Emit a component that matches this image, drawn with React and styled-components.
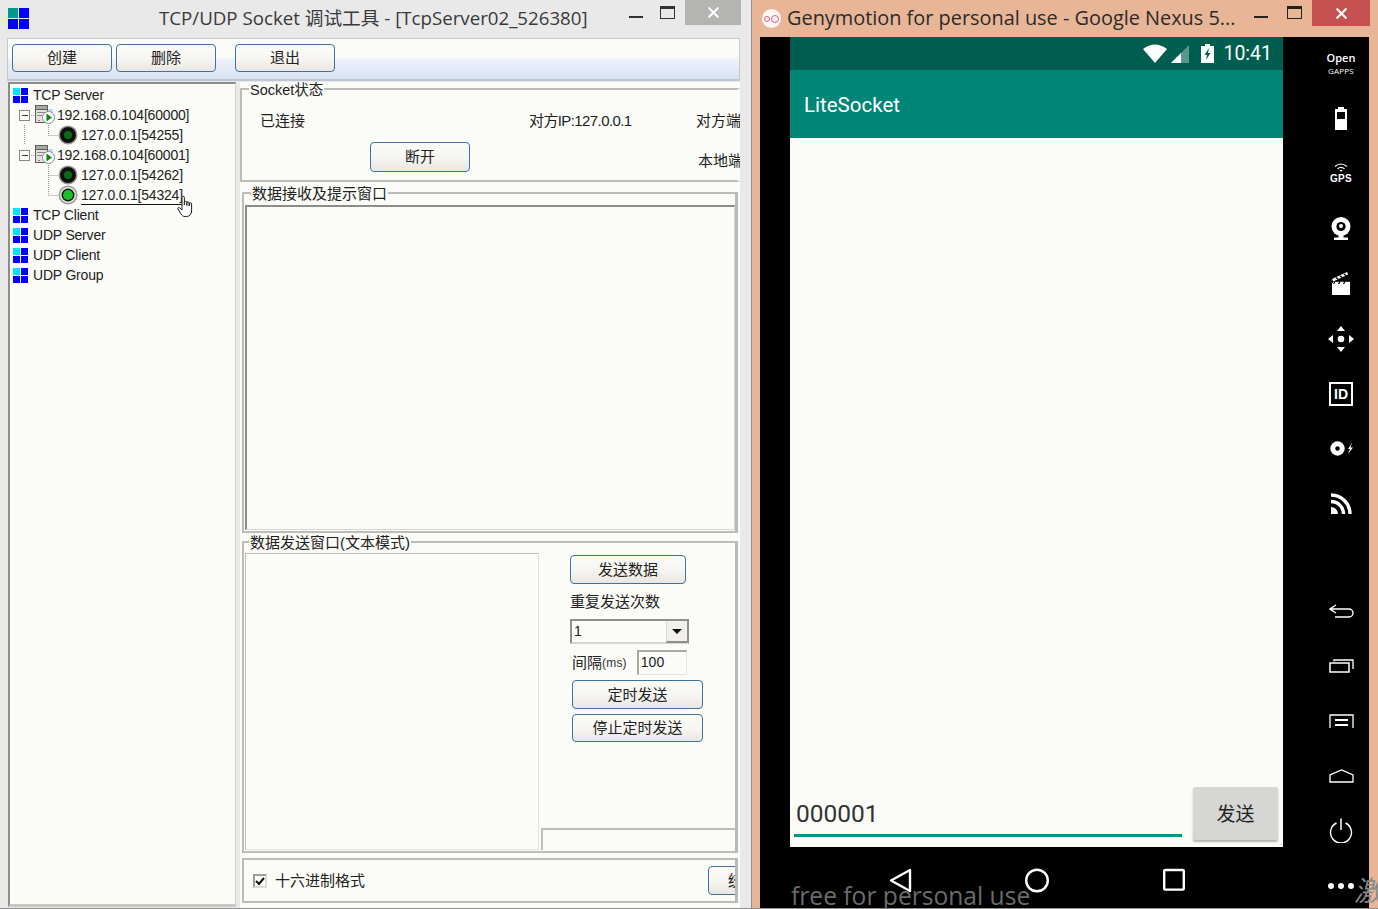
import React from "react";
import styled, { createGlobalStyle } from "styled-components";
import { X } from "lucide-react";

const CJK = `"Noto Sans CJK SC"`;
const UI_FONT = `"Liberation Sans", ${CJK}, sans-serif`;
const TITLE_FONT = `"Open Sans", ${CJK}, sans-serif`;
const PAPER = "#fbfcf8";

const GlobalStyle = createGlobalStyle`
  html, body { margin: 0; padding: 0; background: #e9e9e9; }
  * { box-sizing: border-box; }
`;

const Desktop = styled.div`
  display: flex;
  width: 1378px;
  height: 909px;
  overflow: hidden;
  position: relative;
`;

/* ---------- window chrome ---------- */

const ToolWindow = styled.div`
  width: 752px;
  flex: none;
  background: #e9e9e9;
  border-right: 1px solid #8f8f8f;
  border-bottom: 1px solid #8f8f8f;
  padding-left: 7px;
  display: flex;
  flex-direction: column;
`;

const TitleBar = styled.div`
  height: 38px;
  flex: none;
  display: flex;
  align-items: flex-start;
  position: relative;
`;

const AppLogo = styled.svg`
  position: absolute;
  left: 1px;
  top: 8px;
`;

const TitleText = styled.div`
  position: absolute;
  left: ${(p) => p.$left}px;
  top: 4px;
  font: ${(p) => p.$size}px/28px ${TITLE_FONT};
  color: ${(p) => p.$color || "#3a3a3a"};
  white-space: nowrap;
`;

const WinButtons = styled.div`
  position: absolute;
  top: 0;
  right: ${(p) => p.$right}px;
  display: flex;
  align-items: flex-start;
`;

const MinButton = styled.div`
  width: 14px;
  height: 2px;
  margin-top: 16px;
  background: ${(p) => p.$color};
`;

const MaxButton = styled.div`
  width: 15px;
  height: 13px;
  margin: 6px 10px 0 ${(p) => p.$gap || 17}px;
  border: 1px solid ${(p) => p.$color};
  border-top-width: 3px;
`;

const CloseButton = styled.div`
  width: ${(p) => p.$width}px;
  height: ${(p) => p.$height}px;
  background: ${(p) => p.$bg};
  color: #fff;
  display: flex;
  align-items: center;
  justify-content: center;
`;

/* ---------- tool window client ---------- */

const Client = styled.div`
  width: 733px;
  flex: 1;
  min-height: 0;
  display: flex;
  flex-direction: column;
  background: #e9e9e9;
  font: 14px/20px ${UI_FONT};
  color: #222;
`;

const Toolbar = styled.div`
  height: 43px;
  flex: none;
  display: flex;
  gap: 4px;
  padding: 5px 4px 0 4px;
  border: 1px solid #c9c9c4;
  border-bottom: 2px solid #bcc6d4;
  background: linear-gradient(180deg, ${PAPER} 0 18px, #eef2fb 20px, #d9e2f3 100%);
`;

const WinButton = styled.button`
  width: ${(p) => p.$width}px;
  height: ${(p) => p.$height || 28}px;
  margin-left: ${(p) => p.$gap || 0}px;
  flex: none;
  padding: 0;
  border: 1.5px solid #41719f;
  border-radius: 4px;
  background: linear-gradient(180deg, #fbfbf8 0%, #f6f5f1 55%, #e8e6e0 100%);
  font: 15px/20px ${UI_FONT};
  color: #222;
  white-space: nowrap;
  overflow: hidden;
`;

const Body = styled.div`
  flex: 1;
  min-height: 0;
  display: flex;
  padding-top: 1px;
`;

const TreePanel = styled.div`
  width: 228px;
  margin: 0 4px 1px 1px;
  flex: none;
  padding: 1px 0 0 3px;
  background: ${PAPER};
  border: 1px solid #d4d4cf;
  border-left: 2px solid #8c8c88;
  border-top: 2px solid #8c8c88;
  border-bottom: 3px solid #c9c9c4;
`;

const TreeRowBox = styled.div`
  height: 20px;
  display: flex;
  align-items: center;
  letter-spacing: -0.2px;
  white-space: nowrap;
  position: relative;
  color: #222;
`;

const RootLabel = styled.span`
  margin-left: 5px;
`;

const NodeLabel = styled.span`
  margin: 2px 0 0 ${(p) => p.$gap}px;
  border-bottom: ${(p) => (p.$active ? "1px solid #111" : "1px solid transparent")};
  line-height: 17px;
`;

const HandCursor = styled.svg`
  position: absolute;
  left: 164px;
  top: 10px;
`;

const RightColumn = styled.div`
  width: 500px;
  flex: none;
  display: flex;
  flex-direction: column;
  overflow: hidden;
  background: ${PAPER};
`;

const GroupBox = styled.div`
  margin: ${(p) => p.$margin};
  height: ${(p) => p.$height}px;
  flex: none;
  border: 2px solid #bdbdb8;
  border-right: 3px solid ${(p) => (p.$open ? "transparent" : "#b9b9b4")};
  background: ${PAPER};
  display: flex;
  flex-direction: column;
`;

const Legend = styled.div`
  align-self: flex-start;
  height: 20px;
  margin: -10px 0 -1px ${(p) => p.$left}px;
  padding: 0 1px;
  background: ${PAPER};
  font-size: ${(p) => p.$size || 15}px;
  line-height: 20px;
  white-space: nowrap;
  flex: none;
`;

const StatusGrid = styled.div`
  display: grid;
  grid-template-columns: 110px 159px 167px 60px;
  grid-template-rows: 30px 42px;
  padding: 7px 0 0 18px;
  white-space: nowrap;
  font-size: 15px;
`;

const StatusCell = styled.div`
  grid-column: ${(p) => p.$col};
  grid-row: ${(p) => p.$row};
  line-height: 26px;
  align-self: center;
  margin-left: ${(p) => p.$shift || 0}px;
  margin-top: ${(p) => p.$drop || 0}px;
  letter-spacing: ${(p) => p.$tight || 0}px;
`;

const DisconnectButton = styled(WinButton)`
  grid-column: 2;
  grid-row: 2;
  align-self: center;
`;

const Sunken = styled.div`
  background: ${PAPER};
  border: 1px solid #d6d6d1;
  border-top: 2px solid #8c8c88;
  border-left: 2px solid #8c8c88;
`;

const ReceiveBox = styled(Sunken)`
  flex: 1;
  margin: 2px 0 1px 1px;
`;

const SendRow = styled.div`
  flex: 1;
  min-height: 0;
  display: flex;
  padding: 0 0 1px 1px;
`;

const SendText = styled(Sunken)`
  width: 294px;
  flex: none;
  margin-top: 1px;
  border-width: 1px;
  border-color: #bdbdb8;
  border-right-color: #e2e2dd;
  border-bottom-color: #e2e2dd;
`;

const SendControls = styled.div`
  flex: 1;
  display: flex;
  flex-direction: column;
  padding: 3px 0 0 2px;
  font-size: 15px;
`;

const ControlColumn = styled.div`
  flex: 1;
  padding-left: 29px;
  display: flex;
  flex-direction: column;
  align-items: flex-start;
`;

const RepeatLabel = styled.div`
  margin-top: 8px;
  line-height: 20px;
  font-size: 15px;
`;

const ComboBox = styled.div`
  width: 119px;
  height: 25px;
  margin-top: 7px;
  display: flex;
  justify-content: space-between;
  border: 2px solid #8f8f8b;
  border-bottom-color: #d8d8d3;
  font-size: 14px;
  line-height: 20px;
  padding-left: 2px;
`;

const ComboArrow = styled.div`
  width: 21px;
  height: 22px;
  flex: none;
  background: #f1f0ec;
  border-left: 1px solid #d8d8d3;
  border-bottom: 2px solid #8f8f8b;
  display: flex;
  align-items: center;
  justify-content: center;
  &::after {
    content: "";
    border: 5px solid transparent;
    border-top: 5px solid #111;
    border-bottom: 0;
  }
`;

const IntervalRow = styled.div`
  display: flex;
  align-items: center;
  margin: 6px 0 5px 2px;
  font-size: 15px;
`;

const Small = styled.span`
  font-size: 12px;
  letter-spacing: 0.2px;
  color: #333;
`;

const IntervalInput = styled.div`
  width: 50px;
  height: 25px;
  margin-left: 10px;
  padding-left: 2px;
  font-size: 14px;
  line-height: 20px;
  border: 1px solid #e2e2dd;
  border-top: 2px solid #a8a8a4;
  border-left: 2px solid #a8a8a4;
`;

const TimerButton = styled(WinButton)`
  margin: 0 0 5px 2px;
`;

const SendStatus = styled.div`
  height: 22px;
  border-top: 2px solid #bdbdb8;
  border-left: 2px solid #bdbdb8;
`;

const HexRow = styled.div`
  flex: 1;
  display: flex;
  align-items: center;
  padding-left: 9px;
  font-size: 15px;
  white-space: nowrap;
  overflow: hidden;
`;

const CheckBox = styled.div`
  width: 14px;
  height: 14px;
  flex: none;
  margin-right: 8px;
  background: #fff;
  border: 2px solid #9c9c98;
  border-right-color: #dcdcd8;
  border-bottom-color: #dcdcd8;
  display: flex;
  align-items: center;
  justify-content: center;
`;

const HexSpacer = styled.div`
  flex: 1;
`;

const ClippedButton = styled(WinButton)`
  margin-right: -73px;
`;

/* ---------- genymotion window ---------- */

const GenyWindow = styled.div`
  flex: 1;
  min-width: 0;
  display: flex;
  flex-direction: column;
  background: #e8b696;
  border-bottom: 1px solid #8f8f8f;
`;

const GenyTitle = styled.div`
  height: 37px;
  flex: none;
  position: relative;
`;

const GenyLogo = styled.div`
  position: absolute;
  left: 10px;
  top: 9px;
  width: 19px;
  height: 19px;
  border-radius: 50%;
  background: #fdf6f4;
  display: flex;
  align-items: center;
  justify-content: center;
  gap: 1px;
`;

const GenyDot = styled.div`
  width: ${(p) => p.$size}px;
  height: ${(p) => p.$size}px;
  border: 1.5px solid #ea5a82;
  border-radius: 50%;
`;

const GenyBody = styled.div`
  flex: 1;
  min-height: 0;
  margin: 0 9px 0 8px;
  background: #000;
  display: flex;
  padding-left: 30px;
`;

const Phone = styled.div`
  width: 493px;
  flex: none;
  display: flex;
  flex-direction: column;
`;

const StatusBar = styled.div`
  height: 33px;
  flex: none;
  background: #005e50;
  display: flex;
  align-items: center;
  justify-content: flex-end;
  padding-right: 11px;
  color: #fff;
  font: 19.5px/24px Roboto, sans-serif;
`;

const Clock = styled.span`
  margin-left: 9px;
`;

const StatusIcon = styled.svg`
  margin-left: ${(p) => p.$gap || 0}px;
  flex: none;
`;

const AppBar = styled.div`
  height: 68px;
  flex: none;
  background: #008577;
  color: #fff;
  font: 20.5px/70px Roboto, sans-serif;
  padding-left: 14px;
`;

const Screen = styled.div`
  height: 709px;
  flex: none;
  background: ${PAPER};
  display: flex;
  align-items: flex-end;
  padding: 0 5px 7px 4px;
`;

const MessageInput = styled.div`
  width: 388px;
  height: 40px;
  flex: none;
  margin-bottom: 3px;
  padding-left: 2px;
  border-bottom: 3px solid #009688;
  font: 24.5px/34px Roboto, sans-serif;
  color: #333;
`;

const SendButton = styled.div`
  width: 85px;
  height: 53px;
  margin-left: 11px;
  flex: none;
  background: #d6d7d4;
  border-radius: 2px;
  box-shadow: 0 2px 2px #b5b5b3;
  font: 19px/51px ${CJK}, sans-serif;
  text-align: center;
  color: #222;
`;

const NavBar = styled.div`
  height: 62px;
  flex: none;
  display: flex;
  align-items: flex-start;
  padding: 21px 0 0 99px;
  gap: 113px;
`;

const Watermark = styled.div`
  position: absolute;
  left: ${(p) => p.$left}px;
  top: ${(p) => p.$top}px;
  font: ${(p) => p.$font};
  color: ${(p) => p.$color};
  white-space: nowrap;
`;

const Rail = styled.div`
  width: 86px;
  flex: none;
  display: flex;
  flex-direction: column;
  margin-top: -1px;
`;

const RailGroup = styled.div`
  margin-top: ${(p) => p.$gap || 0}px;
`;

const RailItem = styled.div`
  height: 55px;
  display: flex;
  flex-direction: column;
  align-items: center;
  justify-content: center;
  color: #fff;
  padding-left: 30px;
`;

const GappsOpen = styled.div`
  font: 600 11px/14px "Open Sans", sans-serif;
`;

const GappsName = styled.div`
  font: 8px/11px "Open Sans", sans-serif;
  letter-spacing: 0.2px;
`;

const GpsText = styled.div`
  font: 700 10px/12px "Liberation Sans", sans-serif;
  letter-spacing: 0.3px;
  margin-top: 1px;
`;

const IdBox = styled.div`
  width: 24px;
  height: 24px;
  border: 2px solid #fff;
  font: 700 14px/20px "Liberation Sans", sans-serif;
  text-align: center;
`;

/* ---------- drawings ---------- */

const WinLogo = ({ size = 15, first = "#00e5ff" }) => (
  <svg width={size} height={size} viewBox="0 0 15 15" style={{ flex: "none" }}>
    <rect x="0" y="0" width="7" height="7" fill={first} />
    <rect x="8" y="0" width="7" height="7" fill="#0000ff" />
    <rect x="0" y="8" width="7" height="7" fill="#0000ff" />
    <rect x="8" y="8" width="7" height="7" fill="#0000ff" />
  </svg>
);

const ServerIcon = () => (
  <svg width="21" height="20" viewBox="0 0 21 20" style={{ flex: "none" }}>
    <rect x="12" y="4" width="7" height="6" fill="#c5d8f0" />
    <rect x="1.5" y="0.5" width="12" height="17" fill="#e2e2de" stroke="#5f5f5a" />
    <rect x="1.5" y="0.5" width="12" height="4" fill="#a8a8a2" stroke="#5f5f5a" />
    <rect x="3" y="7" width="9" height="1" fill="#8a8a84" />
    <rect x="3" y="10" width="9" height="1" fill="#8a8a84" />
    <rect x="4" y="15" width="2" height="1" fill="#d9534f" />
    <circle cx="14.5" cy="12.5" r="6" fill="#fff" stroke="#8f8f8a" />
    <path d="M12.5 8.5 L18 12.5 L12.5 16.5 Z" fill="#0a8a14" />
  </svg>
);

const PeerIcon = ({ active }) => (
  <svg width="20" height="20" viewBox="0 0 20 20" style={{ flex: "none" }}>
    <circle cx="10" cy="10" r="9.5" fill="#9a9a96" />
    <circle cx="10" cy="10" r="8" fill={active ? "#dfe8da" : "#111"} />
    <circle cx="10" cy="10" r="6.5" fill="#111" />
    <circle cx="10" cy="10" r={active ? 5 : 4} fill={active ? "#19c22b" : "#0b6b14"} />
  </svg>
);

// dotted guide lines in front of a tree row
const Connector = ({ width, through, branch, box, stem }) => (
  <svg width={width} height="20" style={{ flex: "none" }}>
    {through ? <line x1="11.5" y1="0" x2="11.5" y2="20" stroke="#999" strokeDasharray="1 1" /> : null}
    {branch ? (
      <path d={`M35.5 ${stem ? "0V20" : "0V10.5"} M35.5 10.5H${width}`} stroke="#999" strokeDasharray="1 1" fill="none" />
    ) : null}
    {box ? (
      <>
        <line x1="16" y1="10.5" x2={width} y2="10.5" stroke="#999" strokeDasharray="1 1" />
        <rect x="6.5" y="5.5" width="10" height="10" fill={PAPER} stroke="#888" />
        <line x1="9" y1="10.5" x2="15" y2="10.5" stroke="#333" />
      </>
    ) : null}
  </svg>
);

const Icon = ({ w, h, children, ...rest }) => (
  <svg width={w} height={h} viewBox={`0 0 ${w} ${h}`} fill="none" {...rest}>
    {children}
  </svg>
);

const App = () => (
  <>
    <GlobalStyle />
    <Desktop>
      <ToolWindow>
        <TitleBar>
          <AppLogo width="21" height="21" viewBox="0 0 21 21">
            <rect width="10" height="10" fill="#009a8a" />
            <rect x="11" width="10" height="10" fill="#0000ff" />
            <rect y="11" width="10" height="10" fill="#0000ff" />
            <rect x="11" y="11" width="10" height="10" fill="#0000ff" />
          </AppLogo>
          <TitleText $left={152} $size={18.7}>TCP/UDP Socket 调试工具 - [TcpServer02_526380]</TitleText>
          <WinButtons $right={10}>
            <MinButton $color="#333" />
            <MaxButton $color="#333" />
            <CloseButton $width={56} $height={25} $bg="#b4b4b2">
              <X size={17} strokeWidth={3} />
            </CloseButton>
          </WinButtons>
        </TitleBar>

        <Client>
          <Toolbar>
            <WinButton $width={100}>创建</WinButton>
            <WinButton $width={100}>删除</WinButton>
            <WinButton $width={100} $gap={15}>退出</WinButton>
          </Toolbar>

          <Body>
            <TreePanel>
              <TreeRowBox>
                <WinLogo />
                <RootLabel>TCP Server</RootLabel>
              </TreeRowBox>
              <TreeRowBox>
                <Connector width={21} box />
                <ServerIcon />
                <NodeLabel $gap={2}>192.168.0.104[60000]</NodeLabel>
              </TreeRowBox>
              <TreeRowBox>
                <Connector width={45} through branch />
                <PeerIcon />
                <NodeLabel $gap={3}>127.0.0.1[54255]</NodeLabel>
              </TreeRowBox>
              <TreeRowBox>
                <Connector width={21} box />
                <ServerIcon />
                <NodeLabel $gap={2}>192.168.0.104[60001]</NodeLabel>
              </TreeRowBox>
              <TreeRowBox>
                <Connector width={45} branch stem />
                <PeerIcon />
                <NodeLabel $gap={3}>127.0.0.1[54262]</NodeLabel>
              </TreeRowBox>
              <TreeRowBox>
                <Connector width={45} branch />
                <PeerIcon active />
                <NodeLabel $gap={3} $active>127.0.0.1[54324]</NodeLabel>
                <HandCursor width="18" height="23" viewBox="0 0 18 23">
                  <path
                    d="M5 2.5a1.2 1.2 0 0 1 2.4 0V10V7.5a1.2 1.2 0 0 1 2.4 0V10.5V8a1.2 1.2 0 0 1 2.4 0V11V9a1.2 1.2 0 0 1 2.4 0V16c0 3-2 5.5-5 5.5H8c-2 0-3-1-4-2.5L1 14c-.7-1.2 1-2.2 2-1L5 15Z"
                    fill="#fff"
                    stroke="#222"
                    strokeWidth="1"
                  />
                </HandCursor>
              </TreeRowBox>
              {["TCP Client", "UDP Server", "UDP Client", "UDP Group"].map((name) => (
                <TreeRowBox key={name}>
                  <WinLogo />
                  <RootLabel>{name}</RootLabel>
                </TreeRowBox>
              ))}
            </TreePanel>

            <RightColumn>
              <GroupBox $open $height={94} $margin="6px 0 0 0">
                <Legend $left={7} $size={14.5}>Socket状态</Legend>
                <StatusGrid>
                  <StatusCell $col={1} $row={1}>已连接</StatusCell>
                  <StatusCell $col={3} $row={1} $tight={-0.6}>对方IP:127.0.0.1</StatusCell>
                  <StatusCell $col={4} $row={1}>对方端</StatusCell>
                  <DisconnectButton $width={100} $height={30}>断开</DisconnectButton>
                  <StatusCell $col={4} $row={2} $shift={2} $drop={8}>本地端</StatusCell>
                </StatusGrid>
              </GroupBox>

              <GroupBox $height={341} $margin="10px 2px 0 2px">
                <Legend $left={7}>数据接收及提示窗口</Legend>
                <ReceiveBox />
              </GroupBox>

              <GroupBox $height={312} $margin="8px 2px 0 2px">
                <Legend $left={5}>数据发送窗口(文本模式)</Legend>
                <SendRow>
                  <SendText />
                  <SendControls>
                    <ControlColumn>
                      <WinButton $width={116} $height={29}>发送数据</WinButton>
                      <RepeatLabel>重复发送次数</RepeatLabel>
                      <ComboBox>
                        1
                        <ComboArrow />
                      </ComboBox>
                      <IntervalRow>
                        间隔<Small>(ms)</Small>
                        <IntervalInput>100</IntervalInput>
                      </IntervalRow>
                      <TimerButton $width={131} $height={29}>定时发送</TimerButton>
                      <TimerButton $width={131} $height={28}>停止定时发送</TimerButton>
                    </ControlColumn>
                    <SendStatus />
                  </SendControls>
                </SendRow>
              </GroupBox>

              <GroupBox $height={45} $margin="5px 2px 0 2px">
                <HexRow>
                  <CheckBox>
                    <svg width="10" height="10" viewBox="0 0 10 10">
                      <path d="M1 5 L4 8 L9 2" stroke="#111" strokeWidth="2" fill="none" />
                    </svg>
                  </CheckBox>
                  十六进制格式
                  <HexSpacer />
                  <ClippedButton $width={100} $height={29}>统计清零</ClippedButton>
                </HexRow>
              </GroupBox>
            </RightColumn>
          </Body>
        </Client>
      </ToolWindow>

      <GenyWindow>
        <GenyTitle>
          <GenyLogo>
            <GenyDot $size={6} />
            <GenyDot $size={8} />
          </GenyLogo>
          <TitleText $left={35} $size={19.9} $color="#2a2a2a">
            Genymotion for personal use - Google Nexus 5...
          </TitleText>
          <WinButtons $right={8}>
            <MinButton $color="#222" />
            <MaxButton $color="#222" $gap={19} />
            <CloseButton $width={58} $height={26} $bg="#c75050">
              <X size={17} strokeWidth={3} />
            </CloseButton>
          </WinButtons>
        </GenyTitle>

        <GenyBody>
          <Phone>
            <StatusBar>
              <StatusIcon width="24" height="19" viewBox="0 0 24 19">
                <path d="M0 5 Q12 -4 24 5 L12 19 Z" fill="#fff" />
              </StatusIcon>
              <StatusIcon width="18" height="18" viewBox="0 0 18 18" $gap={4}>
                <path d="M18 0V18H0Z" fill="#fff" opacity="0.35" />
                <path d="M10 8V18H0Z" fill="#fff" />
              </StatusIcon>
              <StatusIcon width="13" height="19" viewBox="0 0 13 19" $gap={12}>
                <path d="M4 0H9V2H13V19H0V2H4Z" fill="#fff" />
                <path d="M8 4 L3.5 11 H6 L5 16 L9.5 9 H7Z" fill="#005e50" />
              </StatusIcon>
              <Clock>10:41</Clock>
            </StatusBar>
            <AppBar>LiteSocket</AppBar>
            <Screen>
              <MessageInput>000001</MessageInput>
              <SendButton>发送</SendButton>
            </Screen>
            <NavBar>
              <Icon w={23} h={25}>
                <path d="M21 2 V23 L2 12.5 Z" stroke="#fff" strokeWidth="2.4" strokeLinejoin="round" />
              </Icon>
              <Icon w={24} h={25}>
                <circle cx="12" cy="12.5" r="10.8" stroke="#fff" strokeWidth="2.4" />
              </Icon>
              <Icon w={22} h={23} style={{ marginLeft: 1 }}>
                <rect x="1.2" y="2" width="19.6" height="19.6" rx="1" stroke="#fff" strokeWidth="2.4" />
              </Icon>
            </NavBar>
          </Phone>

          <Rail>
            <RailGroup>
              <RailItem>
                <GappsOpen>Open</GappsOpen>
                <GappsName>GAPPS</GappsName>
              </RailItem>
              <RailItem>
                <Icon w={12} h={23}>
                  <path d="M3 0H9V2H12V23H0V2H3Z" fill="#fff" />
                  <rect x="2" y="5" width="8" height="7" fill="#000" />
                </Icon>
              </RailItem>
              <RailItem>
                <Icon w={14} h={9} style={{ display: "block" }}>
                  <path d="M1 3.5Q7 -1.5 13 3.5M3.5 5.8Q7 3 10.5 5.8M6 8Q7 7 8 8" stroke="#fff" strokeWidth="1.2" />
                </Icon>
                <GpsText>GPS</GpsText>
              </RailItem>
              <RailItem>
                <Icon w={20} h={23}>
                  <circle cx="10" cy="9.5" r="9.5" fill="#fff" />
                  <circle cx="10" cy="9.5" r="4.6" fill="#000" />
                  <circle cx="10" cy="9" r="2" fill="#fff" />
                  <rect x="7.5" y="18" width="5" height="3" fill="#fff" />
                  <rect x="3" y="20.5" width="14" height="2.5" fill="#fff" />
                </Icon>
              </RailItem>
              <RailItem>
                <Icon w={18} h={23}>
                  <path d="M0 7 L15 0 L16.2 2.6 L1.2 9.6 Z" fill="#fff" />
                  <path d="M4 5.6 L6.5 7.6 M8 3.8 L10.5 5.8 M12 2 L14.5 4" stroke="#000" strokeWidth="1.3" />
                  <rect y="11" width="18" height="12" fill="#fff" />
                  <path d="M1 9.8H18V11H1Z" fill="#fff" />
                  <path d="M3 9.5 L1.5 12 M8 9.5 L6.5 12 M13 9.5 L11.5 12" stroke="#000" strokeWidth="1.3" />
                </Icon>
              </RailItem>
              <RailItem>
                <Icon w={26} h={26}>
                  <path d="M13 0 L17 5 H9Z M13 26 L9 21 H17Z M0 13 L5 9 V17Z M26 13 L21 17 V9Z" fill="#fff" />
                  <circle cx="13" cy="13" r="3.3" fill="#fff" />
                </Icon>
              </RailItem>
              <RailItem>
                <IdBox>ID</IdBox>
              </RailItem>
              <RailItem>
                <Icon w={23} h={15}>
                  <circle cx="7.5" cy="7.5" r="7.2" fill="#fff" />
                  <circle cx="7.5" cy="7.5" r="2.2" fill="#000" />
                  <path d="M22 2 L18 8 H20 L18 13 L23 6.5 H20.5Z" fill="#fff" />
                </Icon>
              </RailItem>
              <RailItem>
                <Icon w={21} h={21}>
                  <path d="M0 2 A19 19 0 0 1 19 21" stroke="#fff" strokeWidth="3.4" />
                  <path d="M0 8.5 A12.5 12.5 0 0 1 12.5 21" stroke="#fff" strokeWidth="3.4" />
                  <path d="M0 14 V21 H7 A7 7 0 0 0 0 14Z" fill="#fff" />
                </Icon>
              </RailItem>
            </RailGroup>

            <RailGroup $gap={52}>
              <RailItem>
                <Icon w={25} h={14}>
                  <path d="M7 1 L1 5 L7 9 M1 5 H20 A3.8 3.8 0 0 1 20 13 H6" stroke="#fff" strokeWidth="1.4" />
                </Icon>
              </RailItem>
              <RailItem>
                <Icon w={25} h={14}>
                  <rect x="1" y="4" width="19" height="9" stroke="#fff" strokeWidth="1.5" />
                  <path d="M5 2.5 L5 1 H24 V10" stroke="#fff" strokeWidth="1.3" />
                </Icon>
              </RailItem>
              <RailItem>
                <Icon w={25} h={14}>
                  <path d="M1 14 V1 H24 V14" stroke="#fff" strokeWidth="1.3" />
                  <path d="M6 6 H19 M6 11 H19" stroke="#fff" strokeWidth="1.8" />
                </Icon>
              </RailItem>
              <RailItem>
                <Icon w={25} h={14}>
                  <path d="M1 13 V6 L12.5 1 L24 6 V13 Z" stroke="#fff" strokeWidth="1.3" />
                </Icon>
              </RailItem>
              <RailItem>
                <Icon w={24} h={25}>
                  <path d="M7.5 5 A10.5 10.5 0 1 0 16.5 5" stroke="#fff" strokeWidth="1.4" />
                  <path d="M12 0.5 V12" stroke="#fff" strokeWidth="1.5" />
                </Icon>
              </RailItem>
              <RailItem>
                <Icon w={26} h={6}>
                  <circle cx="3" cy="3" r="3" fill="#fff" />
                  <circle cx="13" cy="3" r="3" fill="#fff" />
                  <circle cx="23" cy="3" r="3" fill="#fff" />
                </Icon>
              </RailItem>
            </RailGroup>
          </Rail>
        </GenyBody>
      </GenyWindow>

      <Watermark $left={791} $top={880} $color="#6b6b6b" $font={`24.6px/32px "Open Sans", sans-serif`}>free for personal use</Watermark>
      <Watermark $left={1354} $top={872} $color="#8a8a8a" $font={`italic 28px/34px ${CJK}, sans-serif`}>激</Watermark>
    </Desktop>
  </>
);

export default App;
